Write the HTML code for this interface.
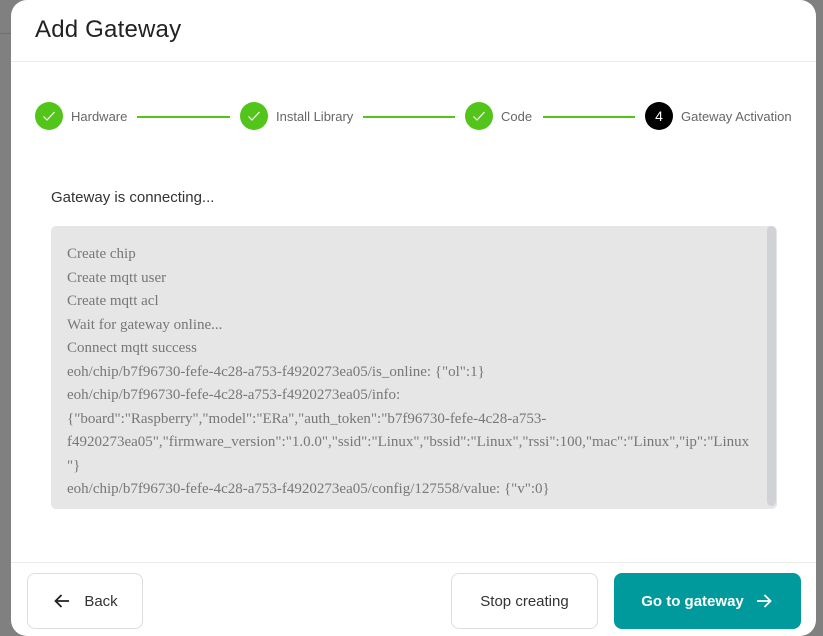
<!DOCTYPE html>
<html><head><meta charset="utf-8"><style>
*{box-sizing:border-box;margin:0;padding:0}
body{width:823px;height:636px;background:#808080;position:relative;overflow:hidden;font-family:"Liberation Sans",sans-serif}
.bgl{position:absolute;left:0;top:33px;width:11px;height:1px;background:#6f6f6f}
.modal{position:absolute;left:11px;top:0;width:805px;height:636px;background:#fff;border-radius:16px}
h1{position:absolute;left:24px;top:16px;font-size:24px;font-weight:normal;color:#222;letter-spacing:0.2px}
.hr{position:absolute;left:0;width:805px;height:1px;background:#ebebeb}
.step{position:absolute;top:102px;height:28px;display:flex;align-items:center}
.c{width:28px;height:28px;border-radius:50%;background:#52c41a;display:flex;align-items:center;justify-content:center}
.c.b{background:#000;color:#fff;font-size:14px}
.lbl{margin-left:8px;font-size:13px;color:#666;white-space:nowrap}
.line{position:absolute;top:116px;height:2px;background:#52c41a}
.title{position:absolute;left:40px;top:189px;font-size:15px;color:#333}
.log{position:absolute;left:40px;top:226px;width:726px;height:283px;background:#e6e6e6;border-radius:5px;padding:17px 16px;font-family:"Liberation Serif",serif;font-size:15px;line-height:23.5px;color:#777}
.sb{position:absolute;right:1px;top:0;width:9px;height:280px;background:#d0d2d5;border-radius:5px}
.btn{position:absolute;top:573px;height:56px;border:1px solid #ddd;border-radius:8px;display:flex;align-items:center;justify-content:center;font-size:15px;color:#333}
</style></head><body>
<div class="bgl"></div>
<div class="modal">
<h1>Add Gateway</h1>
<div class="hr" style="top:61px"></div>
<div class="step" style="left:24px"><div class="c"><svg width="16" height="16" viewBox="0 0 16 16"><path d="M2.5 8.5l3.5 3.5 7.5-8" stroke="#fff" stroke-width="1.2" fill="none"/></svg></div><span class="lbl">Hardware</span></div>
<div class="line" style="left:126px;width:93px"></div>
<div class="step" style="left:229px"><div class="c"><svg width="16" height="16" viewBox="0 0 16 16"><path d="M2.5 8.5l3.5 3.5 7.5-8" stroke="#fff" stroke-width="1.2" fill="none"/></svg></div><span class="lbl">Install Library</span></div>
<div class="line" style="left:352px;width:92px"></div>
<div class="step" style="left:454px"><div class="c"><svg width="16" height="16" viewBox="0 0 16 16"><path d="M2.5 8.5l3.5 3.5 7.5-8" stroke="#fff" stroke-width="1.2" fill="none"/></svg></div><span class="lbl">Code</span></div>
<div class="line" style="left:532px;width:92px"></div>
<div class="step" style="left:634px"><div class="c b">4</div><span class="lbl">Gateway Activation</span></div>
<div class="title">Gateway is connecting...</div>
<div class="log"><div class="sb"></div>
Create chip<br>Create mqtt user<br>Create mqtt acl<br>Wait for gateway online...<br>Connect mqtt success<br>eoh/chip/b7f96730-fefe-4c28-a753-f4920273ea05/is_online: {"ol":1}<br>eoh/chip/b7f96730-fefe-4c28-a753-f4920273ea05/info:<br>{"board":"Raspberry","model":"ERa","auth_token":"b7f96730-fefe-4c28-a753-<br>f4920273ea05","firmware_version":"1.0.0","ssid":"Linux","bssid":"Linux","rssi":100,"mac":"Linux","ip":"Linux<br>"}<br>eoh/chip/b7f96730-fefe-4c28-a753-f4920273ea05/config/127558/value: {"v":0}
</div>
<div class="hr" style="top:562px"></div>
<div class="btn" style="left:16px;width:116px"><svg width="20" height="20" viewBox="0 0 20 20" style="margin-right:12px"><path d="M17 10H3.5M9.5 4L3.5 10l6 6" stroke="#222" stroke-width="1.8" fill="none"/></svg>Back</div>
<div class="btn" style="left:440px;width:147px">Stop creating</div>
<div class="btn" style="left:603px;width:187px;background:#00999c;border-color:#00999c;color:#fff;font-weight:bold">Go to gateway<svg width="20" height="20" viewBox="0 0 20 20" style="margin-left:10px"><path d="M3 10h13.5M10.5 4l6 6-6 6" stroke="#fff" stroke-width="1.8" fill="none"/></svg></div>
</div>
</body></html>
